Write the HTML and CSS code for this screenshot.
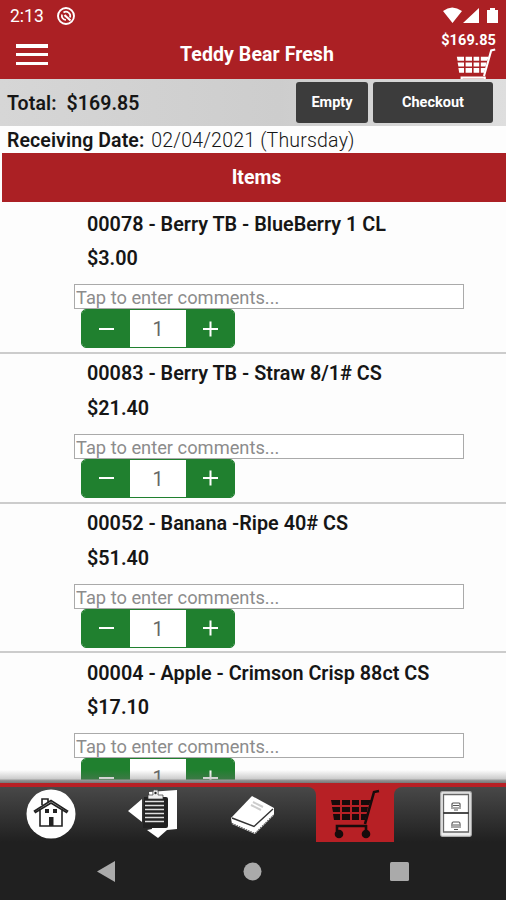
FILE: index.html
```html
<!DOCTYPE html>
<html lang="en">
<head>
  <meta charset="UTF-8"/>
  <meta name="viewport" content="width=device-width,initial-scale=1.0"/>
  <title>Teddy Bear Fresh</title>
  <link rel="stylesheet" href="styles.css">
</head>
<body>
  <svg width="0" height="0" class="defs">
    <symbol id="cart" viewBox="0 0 50 50">
      <path d="M1 11h9v5H2zM12 11h8v5h-8zM22 11h7v5h-7zM31 11h10l-2 5h-8zM2 18h8v5H3zM12 18h8v5h-8zM22 18h7v5h-7zM31 18h7l-1 5h-6zM3 25h7v6H4zM12 25h8v6h-8zM22 25h7v6h-7zM31 25h6l-2 6h-4z"/>
      <path d="M49 2l-5 1-9 32M37 37H7v5M36 36v5" fill="none" stroke="currentColor" stroke-width="2.6"/>
      <circle cx="9" cy="45" r="4.3"/><circle cx="36" cy="45" r="4.3"/>
    </symbol>
  </svg>

  <header>
    <div class="status">
      <span>2:13</span>
      <svg class="dnd" width="20" height="20" viewBox="0 0 20 20" fill="none" stroke="#fff">
        <circle cx="10" cy="10" r="8" stroke-width="1.9"/>
        <path d="M14.500 14.500L8.500 9" stroke-width="2.2"/>
        <path d="M10 14A4.300 4.300 0 0 1 6 8.500M7.500 6.500a4.300 4.300 0 0 1 6.500 5" stroke-width="1.7"/>
      </svg>
      <svg class="signals" width="56" height="18" viewBox="0 0 56 18" fill="#fff">
        <path d="M0 4Q9-3 19 4L9.500 16zM36 1v15H20zM44 3h3V1h5v2h3v13H44z"/>
      </svg>
    </div>
    <div class="topbar">
      <div class="menu"><i></i><i></i><i></i></div>
      <h1>Teddy Bear Fresh</h1>
      <div class="mini-cart">
        <span>$169.85</span>
        <svg width="40" height="40"><use href="#cart"/></svg>
      </div>
    </div>
  </header>

  <div class="total">
    <strong>Total:&nbsp; $169.85</strong>
    <button class="empty">Empty</button>
    <button class="checkout">Checkout</button>
  </div>
  <div class="date"><strong>Receiving Date:</strong> <span>02/04/2021 (Thursday)</span></div>
  <h2>Items</h2>

  <main>
    <div class="item">
      <h3>00078 - Berry TB - BlueBerry 1 CL</h3>
      <p>$3.00</p>
      <input type="text" placeholder="Tap to enter comments...">
      <div class="qty"><button class="minus"></button><span>1</span><button class="plus"></button></div>
    </div>
    <div class="item">
      <h3>00083 - Berry TB - Straw 8/1# CS</h3>
      <p>$21.40</p>
      <input type="text" placeholder="Tap to enter comments...">
      <div class="qty"><button class="minus"></button><span>1</span><button class="plus"></button></div>
    </div>
    <div class="item">
      <h3>00052 - Banana -Ripe 40# CS</h3>
      <p>$51.40</p>
      <input type="text" placeholder="Tap to enter comments...">
      <div class="qty"><button class="minus"></button><span>1</span><button class="plus"></button></div>
    </div>
    <div class="item">
      <h3>00004 - Apple - Crimson Crisp 88ct CS</h3>
      <p>$17.10</p>
      <input type="text" placeholder="Tap to enter comments...">
      <div class="qty"><button class="minus"></button><span>1</span><button class="plus"></button></div>
    </div>
  </main>

  <nav class="tabs">
    <div class="tab-group left">
      <a class="home">
        <svg width="50" height="50" viewBox="0 0 50 50">
          <circle cx="25" cy="25" r="24.500" fill="#fff"/>
          <g fill="none" stroke="#222" stroke-width="1.6">
            <path d="M14 20v17h22V20M8.500 22L25 11.500 41.500 22l-1 1.500L25 14 9.500 23.500zM16 16v-6h6v3"/>
          </g>
          <path d="M19 20h4v4h-4zM27 20h4v4h-4zM23 28h4.500v9H23z" fill="#222"/>
        </svg>
      </a>
      <a class="orders">
        <svg width="52" height="52" viewBox="0 0 52 52">
          <path d="M1 24L15 12v23zM22 5l28-2v39l-10 1-9 8-11-8 5-1z" fill="#fff"/>
          <path d="M17 10h22q2 0 2 2v27q0 2-2 2H16z" fill="#222"/>
          <path d="M18 14.500h19M18 18.500h19M18 22.500h19M18 26.500h19M18 30.500h19M18 34.500h19" stroke="#ddd" stroke-width="1.5"/>
          <path d="M21 12V8h5q-1-6 3-5 3-1 2 5h5v4z" fill="#eee" stroke="#333" stroke-width=".7"/>
          <circle cx="28.500" cy="6" r="1.200" fill="#222"/>
        </svg>
      </a>
      <a class="catalog">
        <svg width="46" height="42" viewBox="0 0 46 42">
          <path d="M1 23L22 1l22 12v7L25 39 2 29z" fill="#fff"/>
          <path d="M2 23l22 8.500L43 14" fill="none" stroke="#333" stroke-width="1.400"/>
          <path d="M2 28.500l23 10 19-19" fill="none" stroke="#555" stroke-width="1.200" stroke-dasharray="1.500 1"/>
          <path d="M23 7l10 5M21 10l10 5" stroke="#ccc" stroke-width="2"/>
        </svg>
      </a>
    </div>
    <a class="cart active"><svg width="50" height="50"><use href="#cart"/></svg></a>
    <div class="tab-group right">
      <a class="files">
        <svg width="32" height="46" viewBox="0 0 32 46">
          <rect x=".7" y=".7" width="30.600" height="44.600" rx="1.500" fill="#eee" stroke="#aaa" stroke-width="1.200"/>
          <path d="M3.500 3.500h25V41h-25z" fill="#fff" stroke="#666" stroke-width="1.300"/>
          <path d="M3.500 22h25" stroke="#111" stroke-width="1.500"/>
          <path d="M12 16v-3q0-1 1-1h6q1 0 1 1v3M11 17h10M14 19h4M12 35v-2q0-2 1-2h6q1 0 1 2v2M11 36h10M14 38.500h4M13 14.500h6M13 34h6" fill="none" stroke="#555" stroke-width="1.200"/>
        </svg>
      </a>
    </div>
  </nav>
  <div class="sysnav">
    <svg width="18" height="21"><path d="M0 10.500L18 0v21z"/></svg>
    <svg width="19" height="19"><circle cx="9.500" cy="9.500" r="9"/></svg>
    <svg width="19" height="19"><rect width="19" height="19" rx="1.500"/></svg>
  </div>
</body>
</html>
```

FILE: styles.css
```css
:root {
  --red:#ab2024; --green:#20802f; --dark:#3c3c3c;
}
* { box-sizing:border-box; margin:0; padding:0; }
body {
  width:506px; height:900px; overflow:hidden;
  display:flex; flex-direction:column;
  background:#fdfdfd; color:#161616;
  font-family:Roboto,sans-serif;
}
.defs { position:absolute; }
button { border:none; font-family:inherit; }

header { height:79px; flex:none; background:var(--red); color:#fff; overflow:hidden; }
.status { height:32px; display:flex; align-items:center; padding:0 7px 0 10px; font-size:17.5px; }
.dnd { margin-left:12px; }
.signals { margin-left:auto; }
.topbar { display:flex; height:47px; padding:0 10px 0 16px; justify-content:space-between; }
.menu { width:57px; padding-top:12px; }
.menu i { display:block; width:32px; height:3.5px; margin-bottom:5.3px; background:#fff; }
.topbar h1 { font-size:19.5px; line-height:46px; font-weight:700; letter-spacing:.08px; }
.mini-cart { width:55px; display:flex; flex-direction:column; align-items:flex-end; }
.mini-cart span { font-size:14.5px; font-weight:700; line-height:18px; letter-spacing:.1px; }
.mini-cart svg { fill:#fff; color:#fff; flex:none; margin-top:-2px; }

.total {
  height:47px; flex:none; display:flex; align-items:center;
  padding:0 13px 0 7px; background:linear-gradient(90deg,#d6d6d6,#cdcdcd 55%,#dedede);
}
.total strong { flex:1; font-size:19.5px; font-weight:600; letter-spacing:.1px; padding-top:2px; }
.total button {
  height:41px; border-radius:3px; background:var(--dark); color:#fff;
  font-size:14.5px; font-weight:700;
}
.total .empty { width:72px; margin-right:5px; }
.total .checkout { width:120px; }
.date { height:27px; flex:none; padding-left:7px; font-size:19.5px; line-height:30px; white-space:nowrap; }
.date strong { font-weight:600; letter-spacing:.1px; margin-right:2px; }
.date span { font-weight:300; letter-spacing:.2px; }
h2 {
  height:49px; flex:none; margin-left:2px; padding-left:5px; background:var(--red); color:#fff;
  font-size:19.5px; line-height:49px; font-weight:700; text-align:center;
}

main { flex:1; min-height:0; overflow:hidden; padding-top:2px; }
/* shadow over the list, right above the tab bar */
main::after {
  content:""; position:absolute; left:0; top:770px; width:506px; height:13px;
  background:linear-gradient(rgba(110,110,110,0),rgba(110,110,110,.35) 9px,#999 10px,#777);
}
.item { height:149.8px; border-bottom:2px solid #ccc; padding-top:3.5px; }
.item h3, .item p { margin-left:87px; font-size:19.8px; font-weight:600; line-height:34.5px; letter-spacing:0; }
.item input {
  display:block; width:390px; height:25px; margin:7.5px 0 0 74px; padding:2px 0 0 1px;
  border:1.5px solid #aaa; background:#fff; font:400 18.3px Roboto,sans-serif;
}
.item input::placeholder { color:#8c8c8c; opacity:1; }
.qty {
  display:flex; width:154px; height:39px; margin-left:81px;
  border:1px solid var(--green); border-radius:5px; overflow:hidden; background:#fff;
}
.qty span { flex:1; text-align:center; font-size:19.5px; line-height:39px; color:#666; }
.qty button { width:48px; display:grid; place-items:center; background:var(--green); }
.qty button::before, .plus::after { content:""; grid-area:1/1; width:15px; height:2px; background:#fff; }
.plus::after { transform:rotate(90deg); }

.tabs { height:59px; flex:none; display:flex; border-top:4px solid #b72025; background:#b72025; }
.tab-group { display:flex; background:linear-gradient(#484848,#202020); }
.tab-group.left { width:316px; border-top-right-radius:8px; }
.tab-group.right { width:112px; border-top-left-radius:8px; }
.tabs a { display:flex; flex:none; justify-content:center; }
.tabs .home { width:102px; padding-top:2px; }
.tabs .orders { width:102px; }
.tabs .catalog { width:98px; padding-top:8px; }
.tabs .cart { width:78px; padding-top:2px; fill:#170b0b; color:#170b0b; }
.tabs .files { width:112px; padding:4px 0 0 12px; }
.sysnav {
  height:58px; flex:none; display:flex; align-items:center; justify-content:space-between;
  padding:0 97px; background:#202020; fill:#aaa;
}
```
